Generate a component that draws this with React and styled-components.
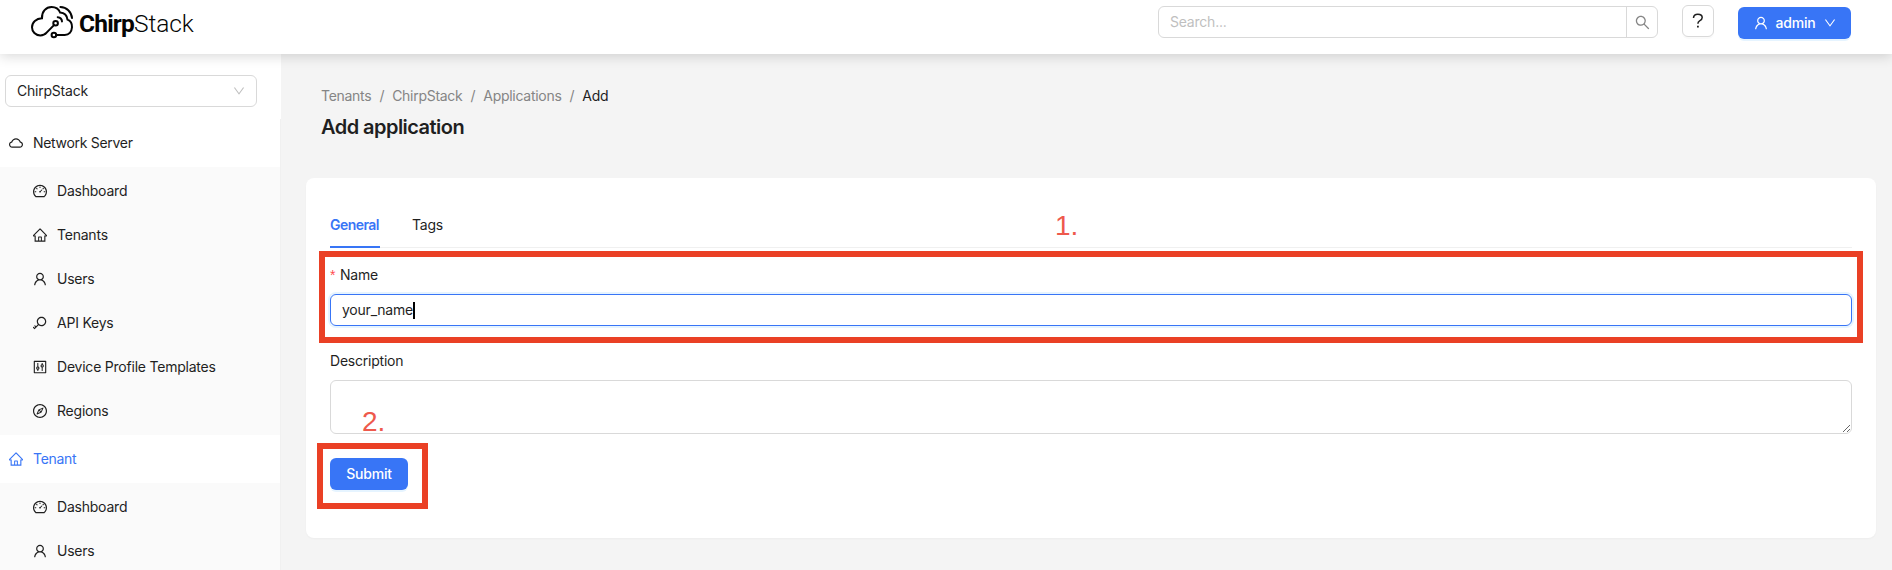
import React from "react";
import styled, { createGlobalStyle, css } from "styled-components";
import {
  AiOutlineCloud,
  AiOutlineCompass,
  AiOutlineControl,
  AiOutlineDashboard,
  AiOutlineDown,
  AiOutlineHome,
  AiOutlineKey,
  AiOutlineSearch,
  AiOutlineUser,
} from "react-icons/ai";

const blue = "#3875f6";
const ink = "#1f1f1f";
const line = "#d9d9d9";
const red = "#ea4025";

const GlobalStyle = createGlobalStyle`
  *, *::before, *::after { box-sizing: border-box; }
  body {
    margin: 0;
    background: #f4f4f4;
    color: ${ink};
    font: 14px/22px Inter, "Liberation Sans", sans-serif;
    letter-spacing: -0.22px;
    overflow: hidden;
  }
  button, input, textarea { font: inherit; letter-spacing: inherit; color: inherit; }
  svg { display: block; flex: none; }
`;

const Page = styled.div`
  height: 570px;
  display: flex;
  flex-direction: column;
  overflow: hidden;
`;

const Header = styled.header`
  position: relative;
  z-index: 1;
  flex: none;
  height: 54px;
  padding: 0 41px 0 31px;
  display: flex;
  justify-content: space-between;
  align-items: flex-start;
  background: #fff;
  box-shadow: 0 2px 12px rgba(0, 0, 0, 0.16);
`;

const Brand = styled.div`
  display: flex;
  color: #050505;
`;

const Wordmark = styled.div`
  margin: 9px 0 0 5px;
  display: flex;
  font: 300 24.5px/30px Roboto, "Liberation Sans", sans-serif;
  letter-spacing: -0.1px;
`;

const WordmarkBold = styled.span`
  font-weight: 700;
  letter-spacing: -0.8px;
`;

const HeaderActions = styled.div`
  display: flex;
  align-items: flex-start;
  gap: 24px;
`;

const Search = styled.div`
  margin-top: 6px;
  width: 500px;
  height: 32px;
  display: flex;
  border: 1px solid ${line};
  border-radius: 6px;
`;

const SearchInput = styled.input`
  flex: 1;
  padding: 0 11px;
  border: 0;
  outline: 0;
  background: transparent;
  &::placeholder { color: #bfbfbf; opacity: 1; }
`;

const SearchButton = styled.button`
  width: 31px;
  padding: 0;
  display: grid;
  place-items: center;
  border: 0;
  border-left: 1px solid ${line};
  background: transparent;
  color: #858585;
`;

const HelpButton = styled.button`
  margin-top: 5px;
  width: 32px;
  height: 32px;
  padding: 0;
  display: grid;
  place-items: center;
  border: 1px solid ${line};
  border-radius: 6px;
  background: #fff;
  box-shadow: 0 2px 0 rgba(0, 0, 0, 0.02);
`;

const PrimaryButton = styled.button`
  height: 32px;
  width: ${(p) => p.$width};
  padding: 0;
  display: flex;
  align-items: center;
  justify-content: center;
  gap: 8px;
  border: 0;
  border-radius: 6px;
  background: ${blue};
  color: #fff;
  font-weight: 500;
  letter-spacing: -0.2px;
  box-shadow: 0 2px 0 rgba(5, 145, 255, 0.1);
`;

const AdminButton = styled(PrimaryButton)`
  margin-top: 7px;
`;

const Body = styled.div`
  flex: 1;
  min-height: 0;
  display: flex;
`;

const Sidebar = styled.aside`
  flex: none;
  width: 281px;
  padding-top: 21px;
  background: #fff;
`;

const TenantSelect = styled.div`
  margin: 0 24px 12px 5px;
  height: 32px;
  padding: 0 11px;
  display: flex;
  align-items: center;
  justify-content: space-between;
  border: 1px solid ${line};
  border-radius: 6px;
  svg { color: #bfbfbf; }
`;

const Menu = styled.nav`
  border-right: 1px solid #f0f0f0;
`;

const MenuRow = styled.div`
  display: flex;
  align-items: center;
  gap: 10px;
`;

const GroupTitle = styled(MenuRow)`
  height: 48px;
  padding-left: 9px;
  letter-spacing: -0.3px;
  ${(p) => p.$active && css`color: ${blue};`}
`;

const SubMenu = styled.div`
  padding: 4px 0;
  display: flex;
  flex-direction: column;
  gap: 4px;
  background: #fafafa;
`;

const MenuItem = styled(MenuRow)`
  height: 40px;
  padding-left: 33px;
`;

const Main = styled.main`
  flex: 1;
  padding: 31px 16px 0 25px;
`;

const PageHeading = styled.div`
  padding: 0 15px;
  height: 93px;
`;

const Breadcrumb = styled.div`
  display: flex;
  color: #858585;
  letter-spacing: -0.28px;
`;

const Crumb = styled.span`
  ${(p) => p.$current && css`color: ${ink};`}
  &:not(:first-child)::before {
    content: "/";
    margin: 0 8px;
    color: #858585;
  }
`;

const Title = styled.h1`
  margin: 4px 0 0;
  font-size: 20px;
  line-height: 32px;
  font-weight: 600;
  letter-spacing: -0.54px;
`;

const Card = styled.section`
  height: 360px;
  padding: 24px;
  border-radius: 8px;
  background: #fff;
  box-shadow: 0 1px 2px rgba(0, 0, 0, 0.03);
`;

const Tabs = styled.div`
  position: relative;
  height: 46px;
  display: flex;
  gap: 32px;
  border-bottom: 1px solid #f0f0f0;
`;

const Tab = styled.div`
  height: 46px;
  padding-top: 12px;
  ${(p) => p.$active && css`
    width: 50px;
    color: ${blue};
    font-weight: 600;
    letter-spacing: -0.55px;
    border-bottom: 2px solid ${blue};
  `}
`;

const Field = styled.div`
  position: relative;
  margin-top: ${(p) => p.$top};
`;

const Label = styled.label`
  display: flex;
  height: 22px;
  margin-bottom: 8px;
`;

const Required = styled.span`
  margin-right: 5px;
  width: 5px;
  color: #ff4d4f;
  font: 14px/22px "Liberation Sans", sans-serif;
`;

const TextField = styled.div`
  height: 32px;
  padding: 0 11px;
  display: flex;
  align-items: center;
  border: 1px solid ${blue};
  border-radius: 6px;
  box-shadow: 0 0 0 2px rgba(5, 145, 255, 0.1);
`;

const Caret = styled.span`
  width: 2px;
  height: 17px;
  background: #000;
`;

const TextArea = styled.textarea`
  display: block;
  width: 100%;
  height: 54px;
  border: 1px solid ${line};
  border-radius: 6px;
  outline: 0;
  resize: vertical;
`;

const FormAction = styled.div`
  position: relative;
  width: fit-content;
  margin-top: 24px;
`;

const Highlight = styled.div`
  position: absolute;
  inset: ${(p) => p.$inset};
  border: 6px solid ${red};
  pointer-events: none;
`;

const StepNumber = styled.span`
  position: absolute;
  left: ${(p) => p.$left};
  top: ${(p) => p.$top};
  color: #ee594c;
  font: 28px/32px "Liberation Sans", sans-serif;
  letter-spacing: 0;
`;

const iconBox = "64 64 896 896";

function Logo() {
  return (
    <svg width="43" height="40" viewBox="31 0 43 40" fill="none" stroke="currentColor" strokeWidth="2" strokeLinecap="round">
      <path d="M54 25.1 46.6 32.6C45 34.5 42.8 35.4 40.3 35.4 35.5 35.4 32 31.7 32 27.2 32 22.2 36.2 18.5 42 18.2 41.6 11.6 46 7 51.6 7 55.7 7 58.8 9.1 60.1 12.5 64.3 12.8 67 15.5 67.5 19.6 70.6 20.8 72.2 23.7 72 27.3 71.7 31.8 69 34.9 64.8 34.9H56.2" />
      <path d="M60.4 7C66.6 7.2 71.4 11.6 72 18" />
      <path d="M57.7 17.2C60.2 17.4 61.8 19 62 21.4" />
      <circle cx="55.6" cy="23.3" r="2.3" />
      <circle cx="53.9" cy="35" r="2.3" />
    </svg>
  );
}

function QuestionIcon() {
  return (
    <svg width="12" height="16" viewBox="0 0 12 16" fill="none" stroke="currentColor" strokeWidth="1.5">
      <path d="M1.5 5C1.5 2.4 3.3 1.2 5.8 1.2S10.2 2.5 10.2 4.6C10.2 6.6 8.9 7.3 7.6 7.9 6.4 8.5 5.9 9 5.9 10.8" />
      <path d="M5.9 12.8v1.8" strokeWidth="1.8" />
    </svg>
  );
}

const networkItems = [
  ["Dashboard", AiOutlineDashboard],
  ["Tenants", AiOutlineHome],
  ["Users", AiOutlineUser],
  ["API Keys", AiOutlineKey],
  ["Device Profile Templates", AiOutlineControl],
  ["Regions", AiOutlineCompass],
];

const tenantItems = [
  ["Dashboard", AiOutlineDashboard],
  ["Users", AiOutlineUser],
];

function MenuGroup({ title, icon: Icon, items, active }) {
  return (
    <>
      <GroupTitle $active={active}>
        <Icon size={14} viewBox={iconBox} />
        {title}
      </GroupTitle>
      <SubMenu>
        {items.map(([label, ItemIcon]) => (
          <MenuItem key={label}>
            <ItemIcon size={14} viewBox={iconBox} />
            {label}
          </MenuItem>
        ))}
      </SubMenu>
    </>
  );
}

export default function App() {
  return (
    <Page>
      <GlobalStyle />
      <Header>
        <Brand>
          <Logo />
          <Wordmark>
            <WordmarkBold>Chirp</WordmarkBold>Stack
          </Wordmark>
        </Brand>
        <HeaderActions>
          <Search>
            <SearchInput placeholder="Search..." />
            <SearchButton aria-label="Search">
              <AiOutlineSearch size={15} viewBox={iconBox} />
            </SearchButton>
          </Search>
          <HelpButton aria-label="Help">
            <QuestionIcon />
          </HelpButton>
          <AdminButton $width="113px">
            <AiOutlineUser size={14} viewBox={iconBox} />
            admin
            <AiOutlineDown size={12} viewBox={iconBox} />
          </AdminButton>
        </HeaderActions>
      </Header>
      <Body>
        <Sidebar>
          <TenantSelect>
            ChirpStack
            <AiOutlineDown size={12} viewBox={iconBox} />
          </TenantSelect>
          <Menu>
            <MenuGroup title="Network Server" icon={AiOutlineCloud} items={networkItems} />
            <MenuGroup title="Tenant" icon={AiOutlineHome} items={tenantItems} active />
          </Menu>
        </Sidebar>
        <Main>
          <PageHeading>
            <Breadcrumb>
              <Crumb>Tenants</Crumb>
              <Crumb>ChirpStack</Crumb>
              <Crumb>Applications</Crumb>
              <Crumb $current>Add</Crumb>
            </Breadcrumb>
            <Title>Add application</Title>
          </PageHeading>
          <Card>
            <Tabs>
              <Tab $active>General</Tab>
              <Tab>Tags</Tab>
              <StepNumber $left="725px" $top="8px">1.</StepNumber>
            </Tabs>
            <Field $top="16px">
              <Label>
                <Required>*</Required>
                Name
              </Label>
              <TextField>
                your_name
                <Caret />
              </TextField>
              <Highlight $inset="-13px -11px -17px -11px" />
            </Field>
            <Field $top="24px">
              <Label>Description</Label>
              <TextArea />
              <StepNumber $left="32px" $top="56px">2.</StepNumber>
            </Field>
            <FormAction>
              <PrimaryButton $width="78px">Submit</PrimaryButton>
              <Highlight $inset="-15px -20px -19px -13px" />
            </FormAction>
          </Card>
        </Main>
      </Body>
    </Page>
  );
}
